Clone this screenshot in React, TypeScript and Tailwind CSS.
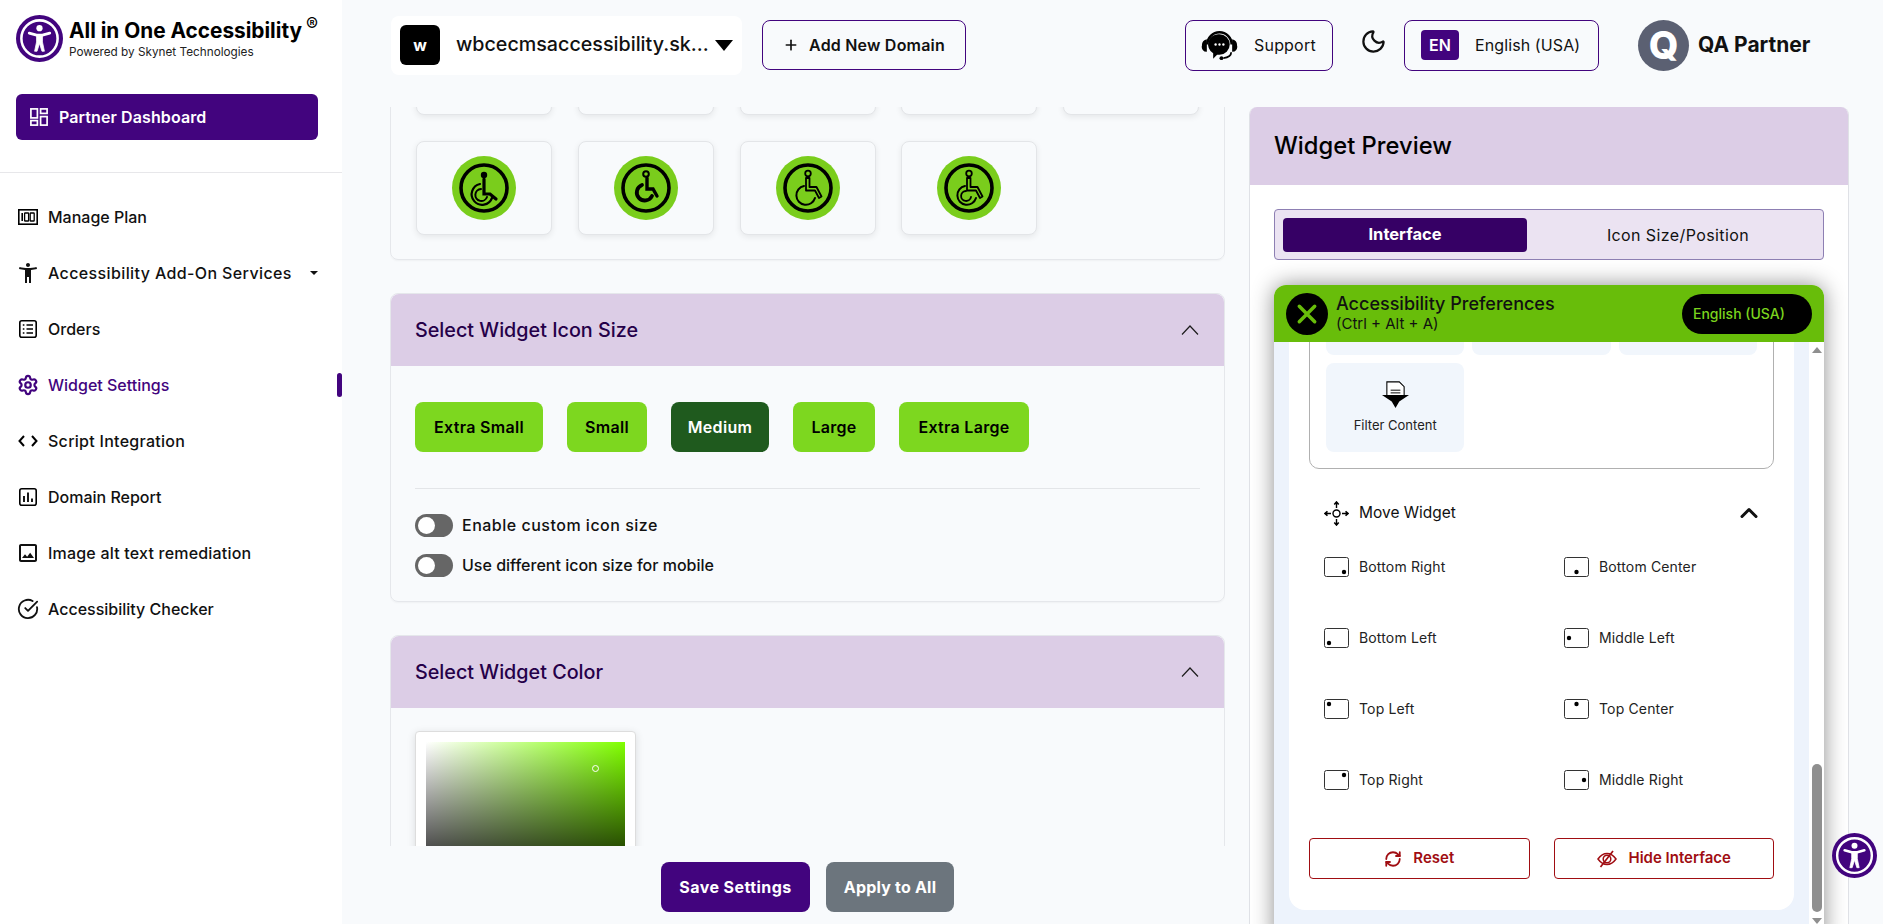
import { ChevronUp, CircleCheckBig, Moon, Plus, RefreshCw, Settings } from "lucide-react";
import { MdAccessibilityNew, MdOutlineImage } from "react-icons/md";

const menu = [
  { label: "Manage Plan", icon: <PlanIcon /> },
  { label: "Accessibility Add-On Services", icon: <MdAccessibilityNew className="w-[26px] h-[26px]" />, caret: true, track: "tracking-[0.38px]" },
  { label: "Orders", icon: <OrdersIcon /> },
  { label: "Widget Settings", icon: <Settings className="w-[22px] h-[22px] fill-none" strokeWidth={2.4} />, active: true },
  { label: "Script Integration", icon: <CodeIcon />, track: "tracking-[0.28px]" },
  { label: "Domain Report", icon: <ReportIcon /> },
  { label: "Image alt text remediation", icon: <MdOutlineImage className="w-[24px] h-[24px]" />, track: "tracking-[0.2px]" },
  { label: "Accessibility Checker", icon: <CircleCheckBig className="w-[22px] h-[22px]" strokeWidth={2} /> },
];

const sizes = [
  { label: "Extra Small", w: "w-[128px]" },
  { label: "Small", w: "w-[80px]" },
  { label: "Medium", w: "w-[98px]", active: true },
  { label: "Large", w: "w-[82px]" },
  { label: "Extra Large", w: "w-[130px]" },
];

// dot position in the little window icon: [cx, cy]
const positions: { label: string; dot: [number, number] }[] = [
  { label: "Bottom Right", dot: [20, 15] },
  { label: "Bottom Center", dot: [12.5, 15] },
  { label: "Bottom Left", dot: [5, 15] },
  { label: "Middle Left", dot: [5, 10] },
  { label: "Top Left", dot: [5, 5] },
  { label: "Top Center", dot: [12.5, 5] },
  { label: "Top Right", dot: [20, 5] },
  { label: "Middle Right", dot: [20, 10] },
];

function PlanIcon() {
  return (
    <svg viewBox="0 0 20 16" className="w-[20px] h-[16px]">
      <rect x="0.8" y="0.8" width="18.4" height="14.4" fill="none" stroke="#000" strokeWidth="1.6" />
      <rect x="3.4" y="4" width="1.6" height="8" fill="#000" />
      <rect x="6.6" y="4" width="4" height="8" rx="0.6" fill="none" stroke="#000" strokeWidth="1.3" />
      <rect x="12.2" y="4" width="4" height="8" rx="0.6" fill="none" stroke="#000" strokeWidth="1.3" />
    </svg>
  );
}

function OrdersIcon() {
  return (
    <svg viewBox="0 0 18 18" className="w-[18px] h-[18px]" fill="none" stroke="#000" strokeWidth="1.6">
      <rect x="0.8" y="0.8" width="16.4" height="16.4" rx="2" />
      <path d="M7.5 5h6.5M7.5 9h6.5M7.5 13h6.5M3.8 5h1.6M3.8 9h1.6M3.8 13h1.6" />
    </svg>
  );
}

function CodeIcon() {
  return (
    <svg viewBox="0 0 20 12" className="w-[20px] h-[12px]" fill="none" stroke="#000" strokeWidth="2">
      <path d="M6 1 1.5 6 6 11M14 1l4.500 5L14 11" />
    </svg>
  );
}

function ReportIcon() {
  return (
    <svg viewBox="0 0 18 18" className="w-[18px] h-[18px]" fill="none" stroke="#000" strokeWidth="1.6">
      <rect x="0.8" y="0.8" width="16.4" height="16.4" rx="2" />
      <path d="M5 8v6M9 4.500V14M13 10.500V14" strokeWidth="1.800" />
    </svg>
  );
}

function DashIcon() {
  return (
    <svg viewBox="0 0 18 18" className="w-[18px] h-[18px]" fill="none" stroke="#fff" strokeWidth="1.700">
      <rect x="0.900" y="0.900" width="6.500" height="9" />
      <rect x="10.600" y="0.900" width="6.500" height="4.500" />
      <rect x="0.900" y="12.600" width="6.500" height="4.500" />
      <rect x="10.600" y="8.600" width="6.500" height="8.500" />
    </svg>
  );
}

function AccessLogo({ className }: { className: string }) {
  return (
    <svg viewBox="0 0 48 48" className={className}>
      <circle cx="24" cy="24" r="24" fill="#42047e" />
      <circle cx="24" cy="24" r="18.500" fill="none" stroke="#fff" strokeWidth="2.600" />
      <circle cx="24" cy="13.500" r="3.200" fill="#fff" />
      <path d="M13.500 18.500 21 20.500h6l7.500-2" fill="none" stroke="#fff" strokeWidth="2.800" strokeLinecap="round" strokeLinejoin="round" />
      <path d="M21 20h6v7.500l2 9.500h-2.500L24 29l-2.500 8H19l2-9.500Z" fill="#fff" stroke="#fff" strokeWidth="0.800" strokeLinejoin="round" />
    </svg>
  );
}

function SupportIcon() {
  return (
    <svg viewBox="0 0 38 38" className="w-[37px] h-[37px]">
      <path d="M6.500 18a12.500 12.500 0 0 1 25 0" fill="none" stroke="#000" strokeWidth="2.600" />
      <path d="M6 12.500v13a5 5 0 0 1-5-6.500 6 6 0 0 1 5-6.500ZM32 12.500v13a5 5 0 0 0 5-6.500 6 6 0 0 0-5-6.500Z" fill="#000" />
      <path d="M19 7.500a10.500 10.500 0 0 1 0 21h-2.500l-4 4v-5.500A10.500 10.500 0 0 1 19 7.500Z" fill="#000" />
      <circle cx="15" cy="18" r="1.200" fill="#fff" />
      <circle cx="19" cy="18" r="1.200" fill="#fff" />
      <circle cx="23" cy="18" r="1.200" fill="#fff" />
      <path d="M31 26c0 3.500-3.500 5.500-8 6" fill="none" stroke="#000" strokeWidth="1.800" />
      <circle cx="21" cy="32" r="2" fill="#000" />
    </svg>
  );
}

function Wheel({ kind }: { kind: number }) {
  return (
    <svg viewBox="0 0 64 64" className="w-[64px] h-[64px]" fill="none" stroke="#000" strokeLinecap="round">
      <circle cx="32" cy="32" r="32" fill="#7acd1c" stroke="none" />
      <circle cx="32" cy="32" r="23" strokeWidth="3.600" />
      {kind === 0 && (
        <>
          <circle cx="32" cy="19" r="3.200" fill="#000" stroke="none" />
          <path d="M32 23v15h6l6 5" strokeWidth="3.200" />
          <path d="M28 28a10.500 10.500 0 1 0 12 14" strokeWidth="2.200" />
          <path d="M29 33a6 6 0 1 0 6 8" strokeWidth="2" />
        </>
      )}
      {kind === 1 && (
        <>
          <circle cx="32" cy="18" r="2.800" strokeWidth="2" />
          <path d="M33 22v11h6l4 7" strokeWidth="3.400" />
          <path d="M28 29a8 8 0 1 0 10 11" strokeWidth="3.800" />
        </>
      )}
      {kind >= 2 && (
        <>
          <circle cx="32" cy="17.500" r="2.800" strokeWidth="1.800" />
          <path d="M30 22h3.500v9h7l5 9.500-2.500 1.500-4-7.500H30Z" strokeWidth="1.800" strokeLinejoin="round" />
          <path d="M28 30a9.500 9.500 0 1 0 11 12" strokeWidth="2" />
          {kind === 3 && <path d="M29 35a5 5 0 1 0 5 6" strokeWidth="1.800" />}
        </>
      )}
    </svg>
  );
}

function Tile({ children }: { children?: React.ReactNode }) {
  return (
    <div className="w-[136px] h-[94px] flex items-center justify-center bg-[#f8fafc] border border-[#e3e5e8] rounded-lg shadow-[0_2px_6px_rgba(0,0,0,0.08)]">
      {children}
    </div>
  );
}

function ThinChevron() {
  return (
    <svg viewBox="0 0 18 10" className="w-[18px] h-[10px]" fill="none" stroke="#1c1c1c" strokeWidth="1.200">
      <path d="M1 9.500 9 1l8 8.500" />
    </svg>
  );
}

function SectionHeader({ title }: { title: string }) {
  return (
    <div className="h-[72px] pl-6 pr-[25px] flex items-center justify-between bg-[#dccde6] rounded-t-lg">
      <h2 className="pt-[1px] text-[19.750px] font-medium text-[#250049]">{title}</h2>
      <ThinChevron />
    </div>
  );
}

function Toggle({ label, track }: { label: string; track?: string }) {
  return (
    <div className="flex items-center gap-[9px]">
      <div className="w-[38px] h-[23px] rounded-full bg-[#666] pl-[3px] flex items-center">
        <div className="w-[17px] h-[17px] rounded-full bg-white" />
      </div>
      <span className={`text-[16px] font-medium text-[#111] ${track ?? ""}`}>{label}</span>
    </div>
  );
}

function MoveIcon() {
  return (
    <svg viewBox="0 0 25 25" className="w-[25px] h-[25px]" fill="none" stroke="#000" strokeWidth="1.400">
      <circle cx="12.500" cy="12.500" r="3.500" />
      <path d="M12.500 7V1.500M12.500 18v5.500M7 12.500H1.500M18 12.500h5.500" />
      <path d="m10.300 3.500 2.200-2.500 2.200 2.500M10.300 21.500l2.200 2.500 2.200-2.500M3.500 10.300 1 12.500l2.500 2.200M21.500 10.300l2.500 2.200-2.500 2.200" strokeWidth="1.600" />
    </svg>
  );
}

function FilterIcon() {
  return (
    <svg viewBox="0 0 25 25" className="w-[27px] h-[27px]">
      <path d="M4.500 15V0.800h11.500l4.500 4.500V15" fill="#fff" stroke="#000" strokeWidth="1" />
      <path d="M8 8.500h9M8 11h9" stroke="#000" strokeWidth="0.900" />
      <path d="M0 13h25l-9 6-3.500 6-3.500-6Z" fill="#000" />
    </svg>
  );
}

function HideIcon() {
  return (
    <svg viewBox="0 0 20 18" className="w-[20px] h-[18px]" fill="none" stroke="#a00d12" strokeWidth="1.500">
      <path d="M1 9c2.500-3.500 5.500-5.500 9-5.500S16.500 5.500 19 9c-2.500 3.500-5.500 5.500-9 5.500S3.500 12.500 1 9Z" />
      <circle cx="10" cy="9" r="3.800" />
      <path d="M16 1 3.500 17" strokeWidth="1.700" />
    </svg>
  );
}

export default function App() {
  return (
    <div className="h-[924px] overflow-hidden flex bg-[#f8fafc] text-[#111] font-[family-name:Inter,'Noto_Sans',sans-serif]">
      {/* Sidebar */}
      <aside className="w-[342px] shrink-0 bg-white">
        <div className="pl-4 pt-[15px] flex items-center gap-[6px]">
          <AccessLogo className="w-[47px] h-[47px]" />
          <div>
            <div className="relative text-[20.800px] leading-[26px] font-bold text-black whitespace-nowrap">
              All in One Accessibility
              <span className="absolute left-[237px] -top-[6px] text-[18px] font-medium leading-[26px]">®</span>
            </div>
            <div className="text-[11.750px] leading-[16px] text-[#222] whitespace-nowrap">Powered by Skynet Technologies</div>
          </div>
        </div>
        <div className="mx-4 mt-8 h-[46px] w-[302px] rounded-md bg-[#42047e] flex items-center pl-[14px] gap-[11px]">
          <DashIcon />
          <span className="text-[16px] font-semibold text-white tracking-[0.1px]">Partner Dashboard</span>
        </div>
        <div className="h-px bg-[#e7e7ea] mt-8" />
        <nav className="pt-[16px]">
          {menu.map((item) => (
            <div key={item.label} className={`relative h-[56px] flex items-center pl-[16px] pr-6 ${item.active ? "text-[#42047e]" : "text-[#111]"}`}>
              <span className="w-[24px] flex justify-center shrink-0">{item.icon}</span>
              <span className={`ml-[8px] text-[16px] font-medium whitespace-nowrap ${item.track ?? ""}`}>{item.label}</span>
              {item.caret && <span className="ml-auto w-0 h-0 border-x-[4px] border-x-transparent border-t-[4px] border-t-[#111]" />}
              {item.active && <span className="absolute right-0 top-[16px] w-[5px] h-[24px] rounded-full bg-[#42047e]" />}
            </div>
          ))}
        </nav>
      </aside>

      <main className="flex-1 min-w-0 flex flex-col">
        {/* Top bar */}
        <header className="h-[90px] mb-[17px] flex items-center pl-[49px] shrink-0">
          <div className="w-[351px] h-[59px] bg-white rounded-lg flex items-center pl-[9px]">
            <div className="w-[40px] h-[40px] rounded-md bg-black text-white flex items-center justify-center font-bold text-[16px]">w</div>
            <span className="ml-[16px] text-[19.700px] font-medium whitespace-nowrap">wbcecmsaccessibility.sk...</span>
            <span className="ml-[6px] w-0 h-0 border-x-[9px] border-x-transparent border-t-[11px] border-t-black" />
          </div>
          <div className="ml-5 w-[204px] h-[50px] rounded-lg border border-[#42047e] flex items-center justify-center gap-[10px]">
            <Plus className="w-4 h-4" strokeWidth={2.500} />
            <span className="text-[16px] font-semibold tracking-[0.2px]">Add New Domain</span>
          </div>
          <div className="ml-[219px] w-[148px] h-[51px] rounded-lg border border-[#42047e] flex items-center pl-[15px] gap-[16px]">
            <SupportIcon />
            <span className="text-[16px] tracking-[0.2px]">Support</span>
          </div>
          <Moon className="ml-[27px] w-[27px] h-[27px] -mt-2" strokeWidth={2} />
          <div className="ml-[17px] w-[195px] h-[51px] rounded-lg border border-[#42047e] flex items-center pl-[16px] gap-[16px]">
            <div className="w-[38px] h-[30px] rounded bg-[#42047e] text-white flex items-center justify-center font-semibold text-[16px]">EN</div>
            <span className="text-[16px] whitespace-nowrap tracking-[0.1px]">English (USA)</span>
          </div>
          <div className="ml-[39px] w-[51px] h-[51px] rounded-full bg-[#5b6072] text-white flex items-center justify-center font-extrabold text-[38px]">Q</div>
          <span className="ml-[9px] text-[21px] font-bold">QA Partner</span>
        </header>

        <div className="flex-1 min-h-0 flex pl-[48px] pr-[35px] gap-[24px]">
          {/* Settings column */}
          <div className="w-[835px] shrink-0 flex flex-col">
            <div className="h-[739px] overflow-hidden">
              <section className="-mt-[112px] mb-[33px] border border-[#e5e7eb] rounded-lg px-[25px] pt-[25px] pb-[24px] shadow-[0_1px_2px_rgba(0,0,0,0.04)]">
                <div className="grid grid-cols-5 gap-x-[26px] gap-y-[26px]">
                  <Tile /><Tile /><Tile /><Tile /><Tile />
                  {[0, 1, 2, 3].map((k) => (
                    <Tile key={k}><Wheel kind={k} /></Tile>
                  ))}
                </div>
              </section>

              <section className="mb-[33px] border border-[#e5e7eb] rounded-lg shadow-[0_1px_2px_rgba(0,0,0,0.04)]">
                <SectionHeader title="Select Widget Icon Size" />
                <div className="px-6 pt-[36px] pb-[24px]">
                  <div className="flex gap-[24px]">
                    {sizes.map((s) => (
                      <div key={s.label} className={`${s.w} h-[50px] rounded-lg flex items-center justify-center text-[16px] font-semibold tracking-[0.3px] ${s.active ? "bg-[#1f5a1e] text-white" : "bg-[#7dd71f] text-black"}`}>
                        {s.label}
                      </div>
                    ))}
                  </div>
                  <div className="h-px bg-[#e3e5e8] mt-[36px] mb-[24px]" />
                  <div className="flex flex-col gap-[16px]">
                    <Toggle label="Enable custom icon size" track="tracking-[0.5px]" />
                    <Toggle label="Use different icon size for mobile" />
                  </div>
                </div>
              </section>

              <section className="border border-[#e5e7eb] rounded-lg">
                <SectionHeader title="Select Widget Color" />
                <div className="px-6 pt-[23px] pb-6">
                  <div className="w-[221px] bg-white rounded border border-[#ddd] shadow-[0_2px_8px_rgba(0,0,0,0.12)] px-[10px] pt-[10px] pb-[10px]">
                    <div className="relative h-[152px] bg-[linear-gradient(to_top,#000,transparent),linear-gradient(to_right,#fff,#80ff00)]">
                      <span className="absolute left-[166px] top-[23px] w-[7px] h-[7px] rounded-full border border-white" />
                    </div>
                  </div>
                </div>
              </section>
            </div>
            <div className="mt-4 flex justify-center gap-4">
              <div className="w-[149px] h-[50px] rounded-lg bg-[#42047e] text-white flex items-center justify-center text-[16px] font-bold tracking-[0.45px]">Save Settings</div>
              <div className="w-[128px] h-[50px] rounded-lg bg-[#6c757d] text-white flex items-center justify-center text-[16px] font-bold tracking-[0.2px]">Apply to All</div>
            </div>
          </div>

          {/* Widget preview */}
          <div className="w-[600px] shrink-0 h-[817px] bg-white border-x border-[#dfe1e6] rounded-t-lg overflow-hidden">
            <div className="h-[78px] bg-[#dccde6] flex items-center pl-[24px]">
              <h2 className="text-[23.750px] font-medium text-black">Widget Preview</h2>
            </div>
            <div className="px-[24px] pt-[24px]">
              <div className="h-[51px] border border-[#8d7fb3] rounded bg-[#ebe3f2] flex items-center pl-[8px]">
                <div className="w-[244px] h-[34px] rounded bg-[#360065] text-white font-bold text-[16.500px] flex items-center justify-center">Interface</div>
                <div className="flex-1 pl-[6px] text-center text-[16px] tracking-[0.4px]">Icon Size/Position</div>
              </div>

              <div className="mt-[25px] rounded-t-xl overflow-hidden shadow-[0_0_22px_rgba(0,0,0,0.45)]">
                <div className="h-[57px] bg-[#68bd0a] flex items-center pl-[12px] pr-[12px]">
                  <div className="w-[42px] h-[42px] rounded-full bg-black flex items-center justify-center">
                    <svg viewBox="0 0 20 20" className="w-[22px] h-[22px]" stroke="#68bd0a" strokeWidth="3.200" strokeLinecap="round">
                      <path d="m3 3 14 14M17 3 3 17" />
                    </svg>
                  </div>
                  <div className="ml-[8px] leading-[20px]">
                    <div className="text-[18px] font-medium text-[#111]">Accessibility Preferences</div>
                    <div className="text-[15px] text-[#111]">(Ctrl + Alt + A)</div>
                  </div>
                  <div className="ml-auto w-[130px] h-[40px] rounded-full bg-black text-[#7bd41e] text-[14px] font-medium flex items-center pl-[11px]">English (USA)</div>
                </div>
                <div className="h-[600px] bg-[#edf3fc] flex">
                  <div className="flex-1 min-w-0 pl-[15px] pr-[15px]">
                    <div className="h-[568px] overflow-hidden bg-white rounded-b-2xl px-[20px]">
                      <div className="-mt-[93px] border border-[#b0b0b0] rounded-[10px] p-[16px]">
                        <div className="grid grid-cols-3 gap-[8px]">
                          <div className="h-[89px] rounded-lg bg-[#f1f6fc]" />
                          <div className="h-[89px] rounded-lg bg-[#f1f6fc]" />
                          <div className="h-[89px] rounded-lg bg-[#f1f6fc]" />
                          <div className="h-[89px] rounded-lg bg-[#f1f6fc] flex flex-col items-center pt-[18px]">
                            <FilterIcon />
                            <span className="mt-[8px] text-[13px] text-[#222]">Filter Content</span>
                          </div>
                        </div>
                      </div>
                      <div className="mt-[31px] pl-[15px] pr-[16px] flex items-center h-[26px]">
                        <MoveIcon />
                        <span className="ml-[10px] text-[15.500px]">Move Widget</span>
                        <ChevronUp className="ml-auto w-[28px] h-[28px] -mr-[5px]" strokeWidth={2.600} />
                      </div>
                      <div className="mt-[5px] pl-[15px] grid grid-cols-[240px_1fr] auto-rows-[71px]">
                        {positions.map((p) => (
                          <div key={p.label} className="flex items-center">
                            <svg viewBox="0 0 25 20" className="w-[25px] h-[20px]">
                              <rect x="0.500" y="0.500" width="24" height="19" rx="2" fill="#fff" stroke="#333" />
                              <circle cx={p.dot[0]} cy={p.dot[1]} r="2.200" fill="#000" />
                            </svg>
                            <span className="ml-[10px] text-[14px] tracking-[0.15px] text-[#222]">{p.label}</span>
                          </div>
                        ))}
                      </div>
                      <div className="mt-[23px] flex gap-[24px]">
                        <div className="flex-1 h-[41px] rounded border border-[#a00d12] text-[#a00d12] flex items-center justify-center gap-[11px] text-[15px] font-semibold">
                          <RefreshCw className="w-[18px] h-[18px]" strokeWidth={2.400} />
                          Reset
                        </div>
                        <div className="flex-1 h-[41px] rounded border border-[#a00d12] text-[#a00d12] flex items-center justify-center gap-[12px] text-[15px] font-semibold">
                          <HideIcon />
                          Hide Interface
                        </div>
                      </div>
                    </div>
                  </div>
                  <div className="w-[15px] bg-white flex flex-col items-center pt-[5px] shrink-0">
                    <span className="w-0 h-0 border-x-[5px] border-x-transparent border-b-[6px] border-b-[#8f8f8f]" />
                    <span className="mt-[411px] w-[10px] h-[148px] rounded-full bg-[#8f8f8f]" />
                    <span className="mt-[6px] w-0 h-0 border-x-[5px] border-x-transparent border-t-[6px] border-t-[#8f8f8f]" />
                  </div>
                </div>
              </div>
            </div>
          </div>
        </div>
      </main>

      {/* floating launcher */}
      <AccessLogo className="absolute left-[1832px] top-[833px] w-[45px] h-[45px]" />
    </div>
  );
}
